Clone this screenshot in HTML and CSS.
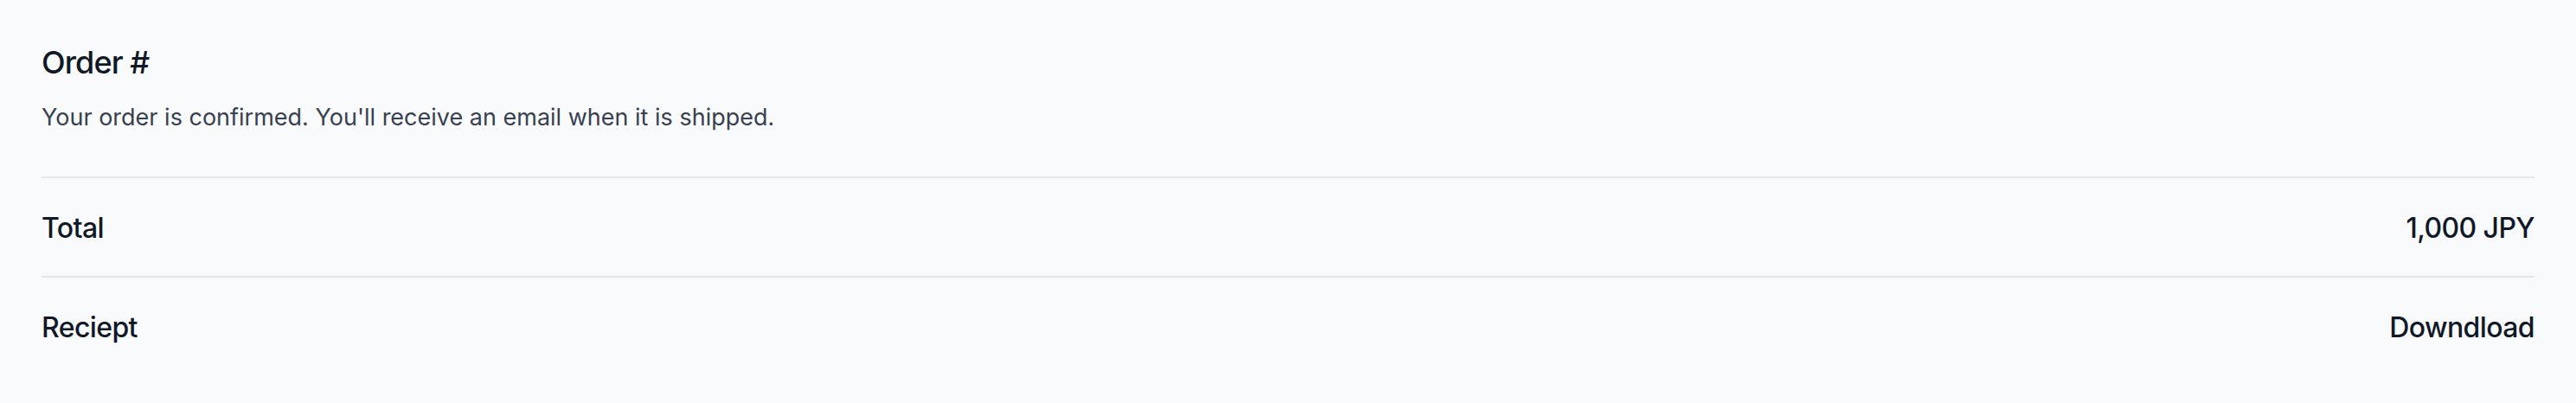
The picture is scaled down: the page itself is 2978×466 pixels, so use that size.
FILE: index.html
```html
<!DOCTYPE html>
<html lang="en">
<head>
<meta charset="utf-8">
<title>Order</title>
<link rel="stylesheet" href="styles.css">
</head>
<body>
<main class="order">
  <header class="order-header">
    <h1 class="order-title">Order #</h1>
    <p class="order-desc">Your order is confirmed. You'll receive an email when it is shipped.</p>
  </header>
  <dl class="order-list">
    <div class="order-row">
      <dt class="row-label">Total</dt>
      <dd class="row-value">1,000 JPY</dd>
    </div>
    <div class="order-row">
      <dt class="row-label">Reciept</dt>
      <dd class="row-value">Downdload</dd>
    </div>
  </dl>
</main>
</body>
</html>
```
FILE: styles.css
```css
html, body {
  margin: 0;
  padding: 0;
  background: #f9fafb;
}
body {
  font-family: Inter, "Noto Sans", "Liberation Sans", sans-serif;
  color: #111827;
  min-height: 466px;
}
.order {
  padding: 0 48px;
}
.order-header {
  padding: 48px 0 48px;
}
.order-title {
  margin: 0;
  font-size: 36px;
  line-height: 48px;
  font-weight: 500;
  letter-spacing: -0.9px;
  color: #111827;
}
.order-desc {
  margin: 20px 0 0;
  font-size: 27px;
  line-height: 40px;
  font-weight: 400;
  color: #374151;
}
.order-list {
  margin: 0;
}
.order-row {
  display: flex;
  justify-content: space-between;
  align-items: center;
  border-top: 2px solid #e5e7eb;
  padding: 33px 0 31px;
  font-size: 32px;
  line-height: 49px;
  font-weight: 500;
  letter-spacing: -0.6px;
}
.row-label, .row-value {
  margin: 0;
}
```
